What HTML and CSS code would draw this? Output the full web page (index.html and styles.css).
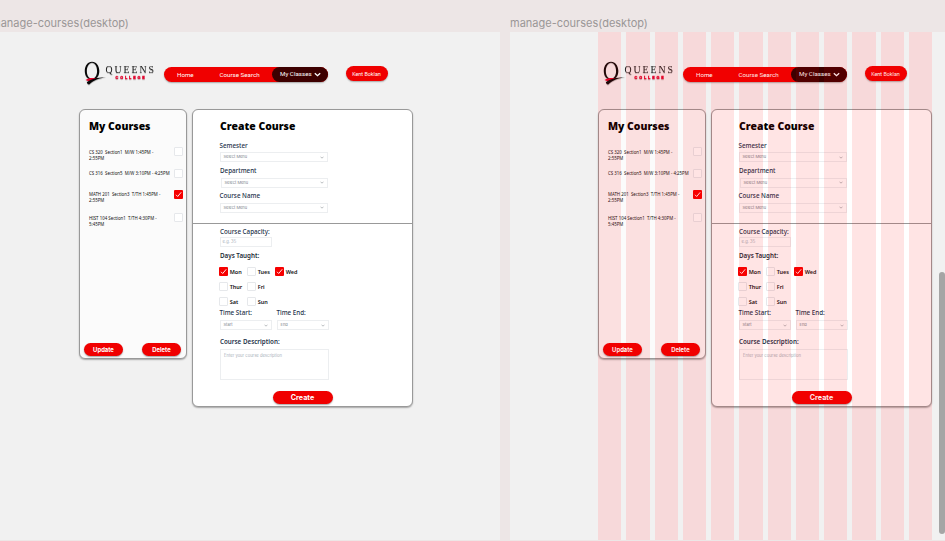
FILE: index.html
```
<!DOCTYPE html>
<html lang="en">
<head>
<meta charset="utf-8">
<title>manage-courses</title>
<link rel="stylesheet" href="styles.css">
</head>
<body>
<main class="canvas">
  <section class="artboard">
    <h2 class="artboard-name">manage-courses(desktop)</h2>
    <div class="frame">
      <header class="header">
        <div class="logo">
          <svg class="logo-mark" viewBox="0 0 24 26" aria-hidden="true">
            <path fill="#080808" fill-rule="evenodd" d="M8 .8C12.400 .8 15.300 5 15.300 10S12.400 18.500 8 18.500S.8 15 .8 10S3.600 .8 8 .8ZM8 1.700C5 1.700 2.800 5.500 2.800 10S5 17.600 8 17.600S13.100 14.500 13.100 10S11.200 1.700 8 1.700Z"/>
            <path fill="#e4002b" d="M1.500 19C6 16 12 17.500 15 17C12 18 8 20 5.500 20.500Z"/>
            <path fill="#080808" d="M2.800 21.200C8 17.500 13 16.400 22 16.500C15 17.200 10 19 5.500 23.300C4.500 24 3 22.500 2.800 21.200Z"/>
          </svg>
          <div class="logo-words"><span class="logo-queens">QUEENS</span><span class="logo-college">COLLEGE</span></div>
        </div>
        <nav class="nav">
          <a class="nav-home">Home</a>
          <a class="nav-search">Course Search</a>
          <a class="nav-current">My Classes
            <svg class="nav-arrow" viewBox="0 0 7 5"><path d="M.8 1.200L3.500 3.700L6.200 1.200" fill="none" stroke="#fff" stroke-width="1.300"/></svg>
          </a>
        </nav>
        <a class="user">Kent Boklan</a>
      </header>
      <div class="panels">
        <section class="panel courses">
          <h1 class="title">My Courses</h1>
          <ul class="course-list">
            <li class="course"><span>CS 320&nbsp; Section1&nbsp; M/W 1:45PM -<br>2:55PM</span><i class="box"></i></li>
            <li class="course short"><span>CS 316&nbsp; Section5&nbsp; M/W 3:10PM - 4:25PM</span><i class="box"></i></li>
            <li class="course tall"><span>MATH 201&nbsp; Section3&nbsp; T/TH 1:45PM -<br>2:55PM</span><i class="box on"><svg viewBox="0 0 9 9"><path d="M2 4.800L3.700 6.500L7.200 2.300"/></svg></i></li>
            <li class="course"><span>HIST 104 Section1&nbsp; T/TH 4:30PM -<br>5:45PM</span><i class="box"></i></li>
          </ul>
          <div class="actions"><button class="btn">Update</button><button class="btn">Delete</button></div>
        </section>
        <section class="panel create">
          <h1 class="title">Create Course</h1>
          <div class="label semester">Semester</div>
          <div class="select">Select Menu<svg viewBox="0 0 4 3"><path d="M.5 .7L2 2.200L3.500 .7"/></svg></div>
          <div class="label department">Department</div>
          <div class="select inset">Select Menu<svg viewBox="0 0 4 3"><path d="M.5 .7L2 2.200L3.500 .7"/></svg></div>
          <div class="label name">Course Name</div>
          <div class="select">Select Menu<svg viewBox="0 0 4 3"><path d="M.5 .7L2 2.200L3.500 .7"/></svg></div>
          <hr class="divider">
          <div class="label capacity">Course Capacity:</div>
          <div class="input">e.g. 35</div>
          <div class="label taught">Days Taught:</div>
          <div class="days">
            <div class="day"><i class="box on"><svg viewBox="0 0 9 9"><path d="M2 4.800L3.700 6.500L7.200 2.300"/></svg></i>Mon</div>
            <div class="day"><i class="box"></i>Tues</div>
            <div class="day"><i class="box on"><svg viewBox="0 0 9 9"><path d="M2 4.800L3.700 6.500L7.200 2.300"/></svg></i>Wed</div>
            <div class="day"><i class="box"></i>Thur</div>
            <div class="day wide"><i class="box"></i>Fri</div>
            <div class="day"><i class="box"></i>Sat</div>
            <div class="day wide"><i class="box"></i>Sun</div>
          </div>
          <div class="times">
            <div><div class="label time">Time Start:</div><div class="select">Start<svg viewBox="0 0 4 3"><path d="M.5 .7L2 2.200L3.500 .7"/></svg></div></div>
            <div><div class="label time">Time End:</div><div class="select">End<svg viewBox="0 0 4 3"><path d="M.5 .7L2 2.200L3.500 .7"/></svg></div></div>
          </div>
          <div class="label description">Course Description:</div>
          <div class="textarea">Enter your course description</div>
          <button class="btn submit">Create</button>
        </section>
      </div>
    </div>
  </section>
</main>
<div class="scrollbar"></div>
<script src="script.js"></script>
</body>
</html>
```
FILE: styles.css
```
* { box-sizing: border-box; margin: 0; padding: 0; }
body { width: 945px; height: 541px; overflow: hidden; background: #ede6e6; font-family: "Noto Sans", sans-serif; }
.canvas { display: flex; gap: 10px; width: 954px; margin-left: -9px; overflow: hidden; }
.artboard { flex: none; width: 509px; }
.artboard-name { height: 32px; padding-top: 14px; font: 400 11px/18px Inter, sans-serif; color: #9a9696; white-space: nowrap; }
.frame { position: relative; height: 508px; padding: 29px 0 0 88px; background: #f1f1f1; }

.header { position: relative; display: flex; height: 48px; }
.logo { display: flex; width: 84.500px; padding-left: 4.500px; filter: drop-shadow(0 1px .6px rgba(0,0,0,.2)); }
.logo-mark { width: 24px; height: 26px; flex: none; }
.logo-words { display: flex; flex-direction: column; width: 60px; margin-left: -2px; padding-top: 4px; }
.logo-queens { font: 400 9.800px/10px "Liberation Serif", serif; letter-spacing: 1.950px; color: #222; white-space: nowrap; }
.logo-college { margin: 0 0 0 10px; font: 900 4.200px/5px Roboto, sans-serif; letter-spacing: 1.900px; color: #e4002b; white-space: nowrap; -webkit-text-stroke: .3px #e4002b; }
.nav { display: flex; width: 164px; height: 15.500px; margin-top: 5.700px; border-radius: 8px; background: #f00000; box-shadow: 0 1px 1.500px rgba(0,0,0,.3); font: 400 6.200px/16px Roboto, sans-serif; color: #fff; white-space: nowrap; }
.nav-home { width: 56px; padding-left: 13.500px; }
.nav-search { width: 52px; }
.nav-current { width: 56px; padding-left: 8.500px; border-radius: 8px; background: #3d0000; display: flex; align-items: center; gap: 2px; }
.nav-arrow { width: 7px; height: 5px; }
.user { width: 42px; height: 15px; margin: 5px 0 0 18px; border-radius: 8px; background: #f00000; box-shadow: 0 1px 1.500px rgba(0,0,0,.3); text-align: center; font: 400 5.400px/16px Roboto, sans-serif; color: #fff; white-space: nowrap; }

.panels { position: relative; display: flex; gap: 5px; align-items: flex-start; }
.panel { border: 1px solid #999; border-radius: 6px; box-shadow: 0 1px 1.500px rgba(0,0,0,.3); }
.courses { width: 108px; height: 250px; background: #fbfbfb; display: flex; flex-direction: column; }
.create { width: 221px; height: 298px; padding-left: 26.500px; background: #fff; }
.title { margin-top: 8px; font: 800 10.400px/16px "Open Sans", sans-serif; color: #000; white-space: nowrap; }
.courses .title { padding-left: 9px; }
.create .title { padding-left: .5px; }

.course-list { list-style: none; margin-top: 13px; padding: 0 3.500px 0 9px; flex: 1; }
.course { display: flex; justify-content: space-between; height: 21.500px; font: 400 4.360px/6px "Noto Sans", sans-serif; color: #111; white-space: nowrap; }
.course span { margin-top: 1.500px; }
.course.short span { margin-top: 1px; }
.course.tall span { margin-top: 1px; }
.course.tall { height: 23px; }
.box { display: block; flex: none; width: 9px; height: 9px; border: 1px solid #e6e8eb; border-radius: 1px; background: #fff; }
.box.on { border: 0; background: #f60000; }
.box svg { display: block; width: 9px; height: 9px; }
.box path { fill: none; stroke: #fff; stroke-width: .9; }
.actions { display: flex; justify-content: space-between; padding: 0 5px 2px 4px; }
.btn { display: block; width: 39px; height: 13px; border: 0; border-radius: 7px; background: #f00000; box-shadow: 0 1px 1.500px rgba(0,0,0,.35); font: 700 5.900px/13px Inter, sans-serif; color: #fff; }

.label { height: 10px; font: 500 6.250px/10px "Noto Sans", sans-serif; color: #24324a; white-space: nowrap; }
.semester { margin-top: 7px; }
.department { margin-top: 4px; padding-left: .5px; }
.name { margin-top: 3px; }
.select { display: flex; justify-content: space-between; align-items: center; width: 108.500px; height: 10px; margin-top: 2px; padding: 0 3px; border: 1px solid #eceef0; background: #fff; font: 400 4px/8px Inter, sans-serif; color: #7c828b; }
.semester + .select { margin-top: 1px; }
.department + .select { margin-top: 1.500px; }
.select.inset { width: 107.500px; margin-left: 1px; }
.select svg { width: 4px; height: 3px; }
.select path { fill: none; stroke: #8b9096; stroke-width: .6; }
.divider { height: 1px; margin: 10.500px 0 0 -26.500px; border: 0; background: #999; }
.capacity { margin-top: 3px; padding-left: .5px; }
.input { width: 52px; height: 10px; margin-left: .5px; padding-left: 1.500px; border: 1px solid #eceef0; font: 400 4.200px/8px Inter, sans-serif; color: #a9b0ba; }
.taught { margin-top: 3.500px; padding-left: .5px; font-weight: 600; color: #222b36; }
.days { display: grid; grid-template-columns: 28px 28px 28px; grid-auto-rows: 15px; margin: 3.500px 0 0 -.3px; }
.day { display: flex; align-items: center; gap: 1.500px; font: 600 5.500px/10px "Noto Sans", sans-serif; color: #111; white-space: nowrap; }
.day .box { margin-top: -1px; }
.day.wide { grid-column: 2 / span 2; }
.times { display: flex; gap: 5px; }
.times .select { width: 52px; margin-top: 3px; }
.time { height: 8px; line-height: 8px; }
.description { margin-top: 6.500px; padding-left: .5px; font-weight: 600; }
.textarea { width: 109px; height: 31px; margin: 2px 0 0 .5px; padding: 2px 3px; border: 1px solid #eceef0; font: 400 4.150px/8px Inter, sans-serif; color: #a9b0ba; white-space: nowrap; }
.submit { width: 60px; height: 13.500px; margin: 11px 0 0 53px; font-size: 7.200px; }

.columns { position: absolute; top: 0; bottom: 0; left: 88px; display: grid; grid-template-columns: repeat(12, 1fr); gap: 5px; width: 334px; }
.columns i { background: rgba(255,0,0,.106); }
.columns.under i { background: #f6f3f4; }
.scrollbar { position: absolute; right: 0; top: 272px; width: 6px; height: 262px; border-radius: 3px; background: #a5a5a5; }
```
FILE: script.js
```
// The second artboard is the same screen with its 12-column layout grid shown.
// A pale layer lies behind the panels and the red tint lies over everything.
const board = document.querySelector('.artboard');
const copy = board.cloneNode(true);
const frame = copy.querySelector('.frame');
function makeColumns(className) {
  const columns = document.createElement('div');
  columns.className = className;
  for (let i = 0; i < 12; i++) columns.append(document.createElement('i'));
  return columns;
}
frame.prepend(makeColumns('columns under'));
frame.append(makeColumns('columns'));
board.after(copy);
```
